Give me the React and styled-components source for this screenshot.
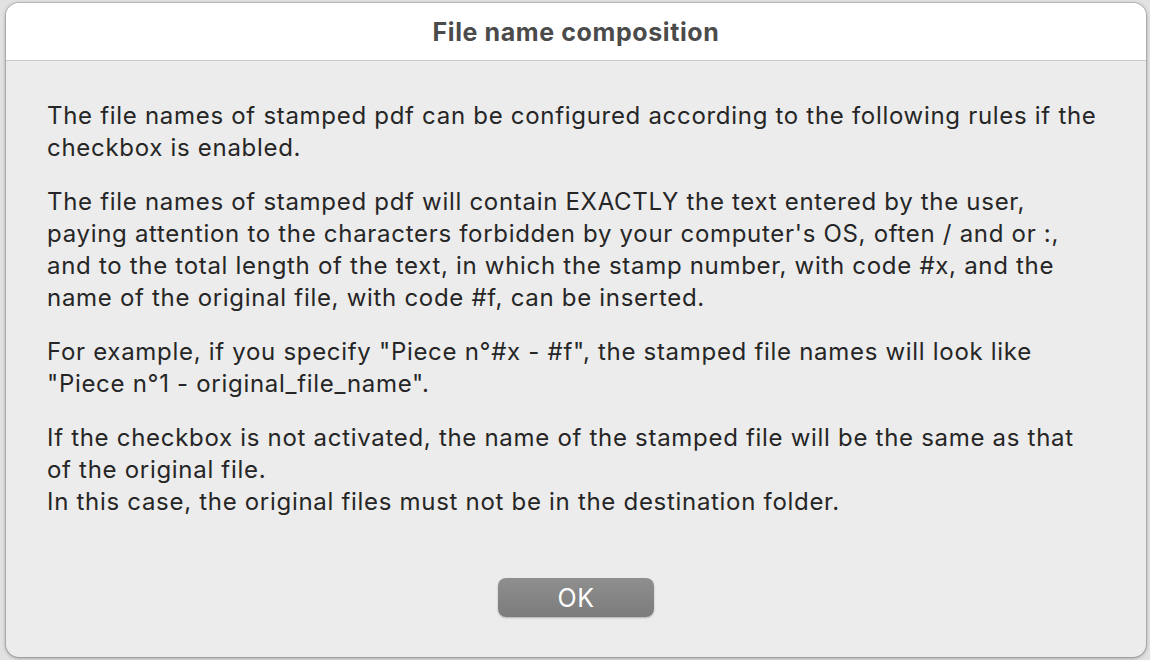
import React from 'react'
import styled, { createGlobalStyle } from 'styled-components'

const GlobalStyle = createGlobalStyle`
  html, body {
    margin: 0;
    padding: 0;
    background: #dcdcdc;
  }
  body {
    font-family: Inter, "Noto Sans", "Liberation Sans", sans-serif;
  }
`

const Screen = styled.div`
  width: 1150px;
  height: 660px;
  padding: 3px 4px 3px 6px;
  box-sizing: border-box;
  background: #e2e2e2;
`

const Dialog = styled.div`
  height: 100%;
  display: flex;
  flex-direction: column;
  border-radius: 13px;
  overflow: hidden;
  background: #ececec;
  box-shadow: 0 0 0 1px rgba(0, 0, 0, 0.12), 0 1px 4px rgba(0, 0, 0, 0.35);
`

const Header = styled.header`
  height: 57px;
  flex: none;
  display: flex;
  align-items: center;
  justify-content: center;
  background: #ffffff;
  border-bottom: 1px solid #c9c9c9;
`

const Title = styled.h1`
  margin: 0;
  font-size: 25px;
  font-weight: 700;
  letter-spacing: 0.6px;
  color: #4b4b4b;
`

const Body = styled.div`
  flex: 1;
  display: flex;
  flex-direction: column;
  padding: 39px 41px 0 41px;
`

const Para = styled.p`
  margin: 0 0 22px;
  font-size: 24px;
  line-height: 32px;
  letter-spacing: 0.7px;
  white-space: nowrap;
  color: #262626;
`

const Footer = styled.div`
  display: flex;
  justify-content: center;
  margin-top: auto;
  padding-bottom: 40px;
`

const OkButton = styled.button`
  width: 156px;
  height: 39px;
  border: none;
  border-radius: 8px;
  background: linear-gradient(#8f8f8f, #7b7b7b);
  box-shadow: 0 1px 2px rgba(0, 0, 0, 0.25);
  color: #ffffff;
  font-family: inherit;
  font-size: 25px;
  letter-spacing: 0.5px;
  padding: 0;
`

export default function App() {
  return (
    <Screen>
      <GlobalStyle />
      <Dialog>
        <Header>
          <Title>File name composition</Title>
        </Header>
        <Body>
          <Para>
            The file names of stamped pdf can be configured according to the following rules if the
            <br />
            checkbox is enabled.
          </Para>
          <Para>
            The file names of stamped pdf will contain EXACTLY the text entered by the user,
            <br />
            paying attention to the characters forbidden by your computer's OS, often / and or :,
            <br />
            and to the total length of the text, in which the stamp number, with code #x, and the
            <br />
            name of the original file, with code #f, can be inserted.
          </Para>
          <Para>
            For example, if you specify "Piece n°#x - #f", the stamped file names will look like
            <br />
            "Piece n°1 - original_file_name".
          </Para>
          <Para>
            If the checkbox is not activated, the name of the stamped file will be the same as that
            <br />
            of the original file.
            <br />
            In this case, the original files must not be in the destination folder.
          </Para>
          <Footer>
            <OkButton>OK</OkButton>
          </Footer>
        </Body>
      </Dialog>
    </Screen>
  )
}
